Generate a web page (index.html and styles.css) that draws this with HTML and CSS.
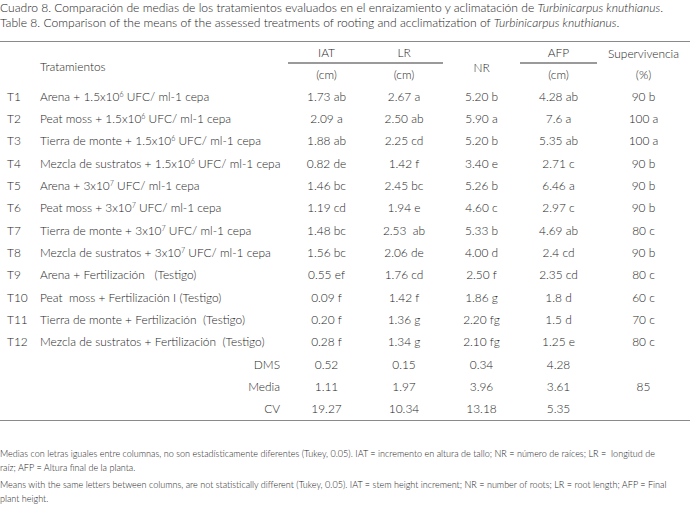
FILE: index.html
```html
<!DOCTYPE html>
<html lang="es">
<head>
<meta charset="utf-8">
<title>Cuadro 8</title>
<link rel="stylesheet" href="styles.css">
</head>
<body>
<div class="page">
  <div class="captions">
    <p class="caption">Cuadro 8. Comparación de medias de los tratamientos evaluados en el enraizamiento y aclimatación de <i>Turbinicarpus knuthianus</i>.</p>
    <p class="caption">Table 8. Comparison of the means of the assessed treatments of rooting and acclimatization of <i>Turbinicarpus knuthianus</i>.</p>
  </div>
  <table class="data">
    <colgroup>
      <col class="c-code"><col class="c-trat"><col class="c-iat"><col class="c-lr"><col class="c-nr"><col class="c-afp"><col class="c-sup">
    </colgroup>
    <thead>
      <tr class="h1">
        <th colspan="2" rowspan="2" class="trat-h">Tratamientos</th>
        <th class="ul">IAT</th>
        <th class="ul">LR</th>
        <th rowspan="2" class="nr-h">NR</th>
        <th class="ul">AFP</th>
        <th>Supervivencia</th>
      </tr>
      <tr class="h2">
        <th>(cm)</th>
        <th>(cm)</th>
        <th>(cm)</th>
        <th>(%)</th>
      </tr>
    </thead>
    <tbody>
      <tr><td class="code">T1</td><td class="trat">Arena + 1.5x10<sup>6</sup> UFC/ ml-1 cepa</td><td>1.73 ab</td><td>2.67 a</td><td>5.20 b</td><td>4.28 ab</td><td>90 b</td></tr>
      <tr><td class="code">T2</td><td class="trat">Peat moss + 1.5x10<sup>6</sup> UFC/ ml-1 cepa</td><td>2.09 a</td><td>2.50 ab</td><td>5.90 a</td><td>7.6 a</td><td>100 a</td></tr>
      <tr><td class="code">T3</td><td class="trat">Tierra de monte + 1.5x10<sup>6</sup> UFC/ ml-1 cepa</td><td>1.88 ab</td><td>2.25 cd</td><td>5.20 b</td><td>5.35 ab</td><td>100 a</td></tr>
      <tr><td class="code">T4</td><td class="trat">Mezcla de sustratos + 1.5x10<sup>6</sup> UFC/ ml-1 cepa</td><td>0.82 de</td><td>1.42 f</td><td>3.40 e</td><td>2.71 c</td><td>90 b</td></tr>
      <tr><td class="code">T5</td><td class="trat">Arena + 3x10<sup>7</sup> UFC/ ml-1 cepa</td><td>1.46 bc</td><td>2.45 bc</td><td>5.26 b</td><td>6.46 a</td><td>90 b</td></tr>
      <tr><td class="code">T6</td><td class="trat">Peat moss + 3x10<sup>7</sup> UFC/ ml-1 cepa</td><td>1.19 cd</td><td>1.94 e</td><td>4.60 c</td><td>2.97 c</td><td>90 b</td></tr>
      <tr><td class="code">T7</td><td class="trat">Tierra de monte + 3x10<sup>7</sup> UFC/ ml-1 cepa</td><td>1.48 bc</td><td>2.53  ab</td><td>5.33 b</td><td>4.69 ab</td><td>80 c</td></tr>
      <tr><td class="code">T8</td><td class="trat">Mezcla de sustratos + 3x10<sup>7</sup> UFC/ ml-1 cepa</td><td>1.56 bc</td><td>2.06 de</td><td>4.00 d</td><td>2.4 cd</td><td>90 b</td></tr>
      <tr><td class="code">T9</td><td class="trat">Arena + Fertilización   (Testigo)</td><td>0.55 ef</td><td>1.76 cd</td><td>2.50 f</td><td>2.35 cd</td><td>80 c</td></tr>
      <tr><td class="code">T10</td><td class="trat">Peat  moss + Fertilización I (Testigo)</td><td>0.09 f</td><td>1.42 f</td><td>1.86 g</td><td>1.8 d</td><td>60 c</td></tr>
      <tr><td class="code">T11</td><td class="trat">Tierra de monte + Fertilización  (Testigo)</td><td>0.20 f</td><td>1.36 g</td><td>2.20 fg</td><td>1.5 d</td><td>70 c</td></tr>
      <tr><td class="code">T12</td><td class="trat">Mezcla de sustratos + Fertilización  (Testigo)</td><td>0.28 f</td><td>1.34 g</td><td>2.10 fg</td><td>1.25 e</td><td>80 c</td></tr>
      <tr><td></td><td class="stat">DMS</td><td>0.52</td><td>0.15</td><td>0.34</td><td>4.28</td><td></td></tr>
      <tr><td></td><td class="stat">Media</td><td>1.11</td><td>1.97</td><td>3.96</td><td>3.61</td><td>85</td></tr>
      <tr><td></td><td class="stat">CV</td><td>19.27</td><td>10.34</td><td>13.18</td><td>5.35</td><td></td></tr>
    </tbody>
  </table>
  <div class="notes">
    <p class="note">Medias con letras iguales entre columnas, no son estadísticamente diferentes (Tukey, 0.05). IAT = incremento en altura de tallo; NR = número de raíces; LR =  longitud de<br>raíz; AFP = Altura final de la planta.</p>
    <p class="note">Means with the same letters between columns, are not statistically different (Tukey, 0.05). IAT = stem height increment; NR = number of roots; LR = root length; AFP = Final<br>plant height.</p>
  </div>
</div>
</body>
</html>
```

FILE: styles.css
```css
html, body {
  margin: 0;
  padding: 0;
  background: #ffffff;
}

.page {
  width: 690px;
  color: #1e1e1e;
  font-family: "Lato", "Liberation Sans", sans-serif;
  font-weight: 300;
}

.captions {
  padding-top: 1px;
  margin-bottom: 11px;
}

.caption {
  margin: 0;
  font-size: 12.1px;
  line-height: 14.5px;
  white-space: nowrap;
}

.data {
  width: 690px;
  border-collapse: collapse;
  table-layout: fixed;
  font-size: 11.9px;
  border-top: 1.5px solid #8a8a8a;
  border-bottom: 1.5px solid #8a8a8a;
}

.c-code { width: 40px; }
.c-trat { width: 248px; }
.c-iat { width: 77px; }
.c-lr { width: 78px; }
.c-nr { width: 77px; }
.c-afp { width: 77px; }
.c-sup { width: 93px; }

.data th {
  font-weight: 300;
  text-align: center;
  padding: 0;
  white-space: nowrap;
}

.data .h1 th {
  height: 19px;
  vertical-align: middle;
  padding-top: 1px;
}

.data .h2 th {
  height: 21px;
  vertical-align: middle;
}

.data th.ul {
  border-bottom: 2px solid #9a9a9a;
}

.data th.trat-h {
  text-align: left;
  padding-left: 40px;
  padding-top: 6px;
  vertical-align: middle;
}

.data th.nr-h {
  padding-top: 8px;
  vertical-align: middle;
}

.data td {
  height: 22.35px;
  padding: 0;
  text-align: center;
  white-space: pre;
  vertical-align: middle;
}

.data td.code {
  text-align: left;
  padding-left: 7px;
}

.data td.trat {
  text-align: left;
}

.data td.stat {
  text-align: right;
  padding-right: 8px;
}

sup {
  font-size: 7px;
  vertical-align: 4px;
  line-height: 0;
}

.notes {
  margin-top: 26px;
}

.note {
  margin: 0 0 2px 0;
  font-size: 9.05px;
  line-height: 14.2px;
  white-space: pre;
}
```
